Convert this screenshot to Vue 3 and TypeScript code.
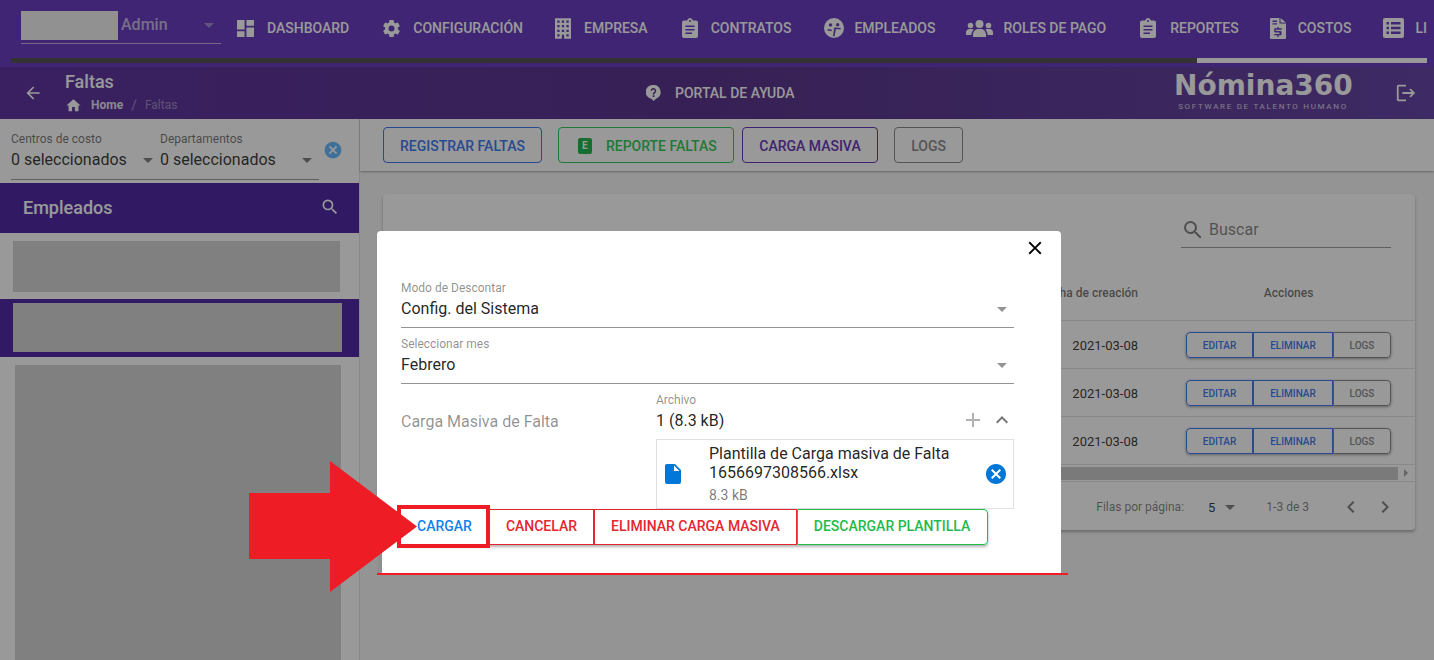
<template>
  <div class="app">
    <header class="topbar">
      <div class="topbar-row">
        <div class="company">
          <div class="company-logo"></div>
          <span class="company-role">Admin</span>
          <svg class="company-caret" viewBox="0 0 24 24" width="24" height="24"><path :d="icons.menuDown" /></svg>
        </div>
        <nav class="nav">
          <a
            v-for="item in navItems"
            :key="item.label"
            class="nav-item"
            :style="{ gap: item.gap + 'px', marginRight: item.mr + 'px' }"
          >
            <svg :viewBox="item.box" :width="item.w" :height="item.h" fill-rule="evenodd"><path :d="item.path" /></svg>
            <span>{{ item.label }}</span>
          </a>
        </nav>
      </div>
      <div class="nav-scroll"><div class="nav-scroll-thumb"></div></div>
    </header>

    <div class="subbar">
      <svg class="back" viewBox="0 0 24 24" width="20" height="20"><path :d="icons.arrowLeft" /></svg>
      <div class="title-block">
        <div class="page-title">Faltas</div>
        <div class="crumbs">
          <svg viewBox="0 0 24 24" width="17" height="17"><path :d="icons.home" /></svg>
          <b>Home</b>
          <span class="crumb-sep">/</span>
          <span class="crumb-last">Faltas</span>
        </div>
      </div>
      <div class="help">
        <svg viewBox="0 0 16 17" width="15" height="16" fill-rule="evenodd"><path :d="icons.help" /></svg>
        <span>PORTAL DE AYUDA</span>
      </div>
      <div class="brand">
        <div class="brand-name">Nómina360</div>
        <div class="brand-sub">SOFTWARE DE TALENTO HUMANO</div>
      </div>
      <svg class="logout" viewBox="0 0 24 24" width="22" height="22"><path :d="icons.logout" /></svg>
    </div>

    <div class="content">
      <aside class="sidebar">
        <div class="filters">
          <div class="filter-fields">
            <div v-for="f in filters" :key="f" class="filter">
              <label>{{ f }}</label>
              <div class="filter-value">
                0 seleccionados
                <svg viewBox="0 0 24 24" width="24" height="24"><path :d="icons.menuDown" /></svg>
              </div>
            </div>
          </div>
          <svg class="filter-clear" viewBox="0 0 24 24" width="20" height="20"><path :d="icons.closeCircle" /></svg>
        </div>
        <div class="side-head">
          <span>Empleados</span>
          <svg viewBox="0 0 24 24" width="20" height="20"><path :d="icons.magnify" /></svg>
        </div>
        <div class="side-list">
          <div class="blur blur-first"></div>
          <div class="side-selected"><div class="blur blur-selected"></div></div>
          <div class="blur blur-rest"></div>
        </div>
      </aside>

      <main class="main">
        <div class="actions">
          <button class="btn btn-blue">REGISTRAR FALTAS</button>
          <button class="btn btn-green"><i class="excel">E</i>REPORTE FALTAS</button>
          <button class="btn btn-purple">CARGA MASIVA</button>
          <button class="btn btn-grey">LOGS</button>
        </div>
        <section class="card">
          <div class="card-search">
            <div class="search-box">
              <svg viewBox="0 0 24 24" width="24" height="24"><path :d="icons.magnify" /></svg>
              <span>Buscar</span>
            </div>
          </div>
          <div class="row row-head">
            <span class="col-date">Fecha de creación</span>
            <span class="col-actions">Acciones</span>
          </div>
          <div v-for="r in rows" :key="r" class="row">
            <span class="col-date cell-date">2021-03-08</span>
            <div class="col-actions row-btns">
              <button class="mini mini-edit">EDITAR</button>
              <button class="mini mini-del">ELIMINAR</button>
              <button class="mini mini-logs">LOGS</button>
            </div>
          </div>
          <div class="hscroll">
            <div class="hscroll-thumb"></div>
            <i class="hscroll-arrow"></i>
          </div>
          <div class="pager">
            <span class="pager-label">Filas por página:</span>
            <span class="pager-size">5</span>
            <svg class="pager-caret" viewBox="0 0 24 24" width="24" height="24"><path :d="icons.menuDown" /></svg>
            <span class="pager-range">1-3 de 3</span>
            <svg class="pager-nav" viewBox="0 0 24 24" width="24" height="24"><path :d="icons.chevronLeft" /></svg>
            <svg class="pager-nav" viewBox="0 0 24 24" width="24" height="24"><path :d="icons.chevronRight" /></svg>
          </div>
        </section>
      </main>
    </div>

    <div class="scrim"></div>

    <div class="dialog">
      <div class="dialog-top">
        <svg viewBox="0 0 24 24" width="22" height="22"><path :d="icons.close" /></svg>
      </div>
      <div v-for="s in selects" :key="s.label" class="select">
        <label>{{ s.label }}</label>
        <div class="select-value">
          {{ s.value }}
          <svg viewBox="0 0 24 24" width="24" height="24"><path :d="icons.menuDown" /></svg>
        </div>
      </div>
      <div class="upload">
        <div class="upload-label">Carga Masiva de Falta</div>
        <div class="upload-field">
          <label>Archivo</label>
          <div class="upload-count">
            <span>1 (8.3 kB)</span>
            <svg class="upload-plus" viewBox="0 0 24 24" width="24" height="24"><path :d="icons.plus" /></svg>
            <svg class="upload-toggle" viewBox="0 0 24 24" width="24" height="24"><path :d="icons.chevronUp" /></svg>
          </div>
          <div class="file-card">
            <svg class="file-icon" viewBox="4 2 16 20" width="16" height="20"><path :d="icons.file" /></svg>
            <div class="file-text">
              <div class="file-name">Plantilla de Carga masiva de Falta 1656697308566.xlsx</div>
              <div class="file-size">8.3 kB</div>
            </div>
            <svg class="file-remove" viewBox="0 0 24 24" width="24" height="24"><path :d="icons.closeCircle" /></svg>
          </div>
        </div>
      </div>
      <div class="dialog-btns">
        <button class="dbtn dbtn-blue">CARGAR</button>
        <button class="dbtn dbtn-red">CANCELAR</button>
        <button class="dbtn dbtn-red">ELIMINAR CARGA MASIVA</button>
        <button class="dbtn dbtn-green">DESCARGAR PLANTILLA</button>
      </div>
    </div>

    <!-- annotation painted on top of the screenshot -->
    <div class="mark-line"></div>
    <div class="mark-notch"></div>
    <div class="mark-box"></div>
    <svg class="mark-arrow" viewBox="0 0 168 131" width="168" height="131">
      <path d="M0 32H81V0L168 65.5L81 131V98H0Z" fill="#ee1c25" />
    </svg>
  </div>
</template>

<script setup lang="ts">
const icons = {
  menuDown: 'M7,10L12,15L17,10H7Z',
  arrowLeft: 'M20,11V13H8L13.5,18.5L12.08,19.92L4.16,12L12.08,4.08L13.5,5.5L8,11H20Z',
  home: 'M10,20V14H14V20H19V12H22L12,3L2,12H5V20H10Z',
  help: 'M8 0a7.5 7.5 0 0 1 3 14.4L8 17l-1.8-2.1A7.5 7.5 0 0 1 8 0zM8 3.2a3 3 0 0 0-3 3h1.7a1.3 1.3 0 1 1 2.2.9c-.9.8-1.8 1.4-1.8 3h1.8c0-1.1.7-1.5 1.4-2.2A3 3 0 0 0 8 3.2zM7.1 10.900v1.800h1.800v-1.800z',
  logout: 'M17 7L15.59 8.41L18.17 11H8V13H18.17L15.59 15.58L17 17L22 12M4 5H12V3H4C2.9 3 2 3.9 2 5V19C2 20.1 2.9 21 4 21H12V19H4V5Z',
  closeCircle: 'M12,2C17.53,2 22,6.47 22,12C22,17.53 17.53,22 12,22C6.47,22 2,17.53 2,12C2,6.47 6.47,2 12,2M15.59,7L12,10.59L8.41,7L7,8.41L10.59,12L7,15.59L8.41,17L12,13.41L15.59,17L17,15.59L13.41,12L17,8.41L15.59,7Z',
  magnify: 'M9.5,3A6.5,6.5 0 0,1 16,9.5C16,11.11 15.41,12.59 14.44,13.73L14.71,14H15.5L20.5,19L19,20.5L14,15.5V14.71L13.73,14.44C12.59,15.41 11.11,16 9.5,16A6.5,6.5 0 0,1 3,9.5A6.5,6.5 0 0,1 9.5,3M9.5,5C7,5 5,7 5,9.5C5,12 7,14 9.5,14C12,14 14,12 14,9.5C14,7 12,5 9.5,5Z',
  close: 'M19,6.41L17.59,5L12,10.59L6.41,5L5,6.41L10.59,12L5,17.59L6.41,19L12,13.41L17.59,19L19,17.59L13.41,12L19,6.41Z',
  plus: 'M19,13H13V19H11V13H5V11H11V5H13V11H19V13Z',
  chevronUp: 'M7.41,15.41L12,10.83L16.59,15.41L18,14L12,8L6,14L7.41,15.41Z',
  chevronLeft: 'M15.41,16.58L10.83,12L15.41,7.41L14,6L8,12L14,18L15.41,16.58Z',
  chevronRight: 'M8.59,16.58L13.17,12L8.59,7.41L10,6L16,12L10,18L8.59,16.58Z',
  file: 'M13,9V3.5L18.5,9M6,2C4.89,2 4,2.89 4,4V20A2,2 0 0,0 6,22H18A2,2 0 0,0 20,20V8L14,2H6Z',
}

const clipboard = 'M2 2.500h3.200C5.600 1 6.700 0 8 0s2.400 1 2.800 2.500H14a2 2 0 0 1 2 2V18a2 2 0 0 1-2 2H2a2 2 0 0 1-2-2V4.500a2 2 0 0 1 2-2zM8 2a1 1 0 1 0 0 2 1 1 0 0 0 0-2zM3.500 7.500v1.600h9V7.500zM3.500 11v1.600h9V11zM3.500 14.500v1.600h6.500v-1.600z'

// gap and mr differ per item: the original nav sizes each icon box on its own
const navItems = [
  { label: 'DASHBOARD', box: '3 3 18 18', w: 17, h: 17, gap: 13, mr: 34, path: 'M13,3V9H21V3M13,21H21V11H13M3,21H11V15H3M3,13H11V3H3V13Z' },
  { label: 'CONFIGURACIÓN', box: '2 2 20 20', w: 17, h: 17, gap: 13, mr: 32, path: 'M12,15.5A3.5,3.5 0 0,1 8.5,12A3.5,3.5 0 0,1 12,8.5A3.5,3.5 0 0,1 15.5,12A3.5,3.5 0 0,1 12,15.5M19.43,12.97C19.47,12.65 19.5,12.33 19.5,12C19.5,11.67 19.47,11.34 19.43,11L21.54,9.37C21.73,9.22 21.78,8.95 21.66,8.73L19.66,5.27C19.54,5.05 19.27,4.96 19.05,5.05L16.56,6.05C16.04,5.66 15.5,5.32 14.87,5.07L14.5,2.42C14.46,2.18 14.25,2 14,2H10C9.75,2 9.54,2.18 9.5,2.42L9.13,5.07C8.5,5.32 7.96,5.66 7.44,6.05L4.95,5.05C4.73,4.96 4.46,5.05 4.34,5.27L2.34,8.73C2.21,8.95 2.27,9.22 2.46,9.37L4.57,11C4.53,11.34 4.5,11.67 4.5,12C4.5,12.33 4.53,12.65 4.57,12.97L2.46,14.63C2.27,14.78 2.21,15.05 2.34,15.27L4.34,18.73C4.46,18.95 4.73,19.03 4.95,18.95L7.44,17.94C7.96,18.34 8.5,18.68 9.13,18.93L9.5,21.58C9.54,21.82 9.75,22 10,22H14C14.25,22 14.46,21.82 14.5,21.58L14.87,18.93C15.5,18.67 16.04,18.34 16.56,17.94L19.05,18.95C19.27,19.03 19.54,18.95 19.66,18.73L21.66,15.27C21.78,15.05 21.73,14.78 21.54,14.63L19.43,12.97Z' },
  { label: 'EMPRESA', box: '5 3 14 18', w: 16, h: 21, gap: 13, mr: 34, path: 'M5,3V21H11V17.5H13V21H19V3H5M7,5H9V7H7V5M11,5H13V7H11V5M15,5H17V7H15V5M7,9H9V11H7V9M11,9H13V11H11V9M15,9H17V11H15V9M7,13H9V15H7V13M11,13H13V15H11V13M15,13H17V15H15V13M7,17H9V19H7V17M15,17H17V19H15V17Z' },
  { label: 'CONTRATOS', box: '0 0 16 20', w: 16, h: 20, gap: 13, mr: 33, path: clipboard },
  { label: 'EMPLEADOS', box: '0 0 20 20', w: 20, h: 20, gap: 10, mr: 31, path: 'M10 0a10 10 0 1 1 0 20a10 10 0 1 1 0-20zM6.500 5.200a1.700 1.700 0 1 0 0 3.400a1.700 1.700 0 1 0 0-3.400zM13.700 5a1.700 1.700 0 1 0 0 3.400a1.700 1.700 0 1 0 0-3.400zM10.300 9.500l-1.300 8.700h1.600l1.300-7.200 4.600.4.200-1.500zM3.800 10.900l-.3 1.500 4 .8.300-1.500z' },
  { label: 'ROLES DE PAGO', box: '0 0 27 17', w: 27, h: 17, gap: 10, mr: 34, path: 'M13.500 0a4 4 0 1 1 0 8a4 4 0 1 1 0-8zM4.500 2.700a2.800 2.800 0 1 1 0 5.600a2.800 2.800 0 1 1 0-5.600zM22.500 2.700a2.800 2.800 0 1 1 0 5.600a2.800 2.800 0 1 1 0-5.600zM7 17v-2.500c0-3 2.500-5.500 5-5.500h3c2.500 0 5 2.500 5 5.500V17zM0 15v-2.500C0 10.500 1.500 9 3.500 9H6c.7 0 1.300.2 1.700.6C6.300 11 5.400 13 5.400 15zM27 15v-2.500c0-2-1.500-3.500-3.500-3.500H21c-.7 0-1.300.2-1.700.6 1.400 1.400 2.300 3.400 2.300 5.400z' },
  { label: 'REPORTES', box: '0 0 16 20', w: 16, h: 20, gap: 14, mr: 31, path: clipboard },
  { label: 'COSTOS', box: '0 0 16 21', w: 16, h: 21, gap: 12, mr: 32, path: 'M1 0h8.500v5.500H16V20a1 1 0 0 1-1 1H1a1 1 0 0 1-1-1V1a1 1 0 0 1 1-1zM2.500 2.500v1.400h4.500V2.500zM2.500 5.200v1.400h4.500V5.200zM7.300 9v1.300H5.200a1 1 0 0 0-1 1v2.300a1 1 0 0 0 1 1h4.300v1.300H4.200v1.400h3.100V19h1.400v-1.700h1.800a1 1 0 0 0 1-1v-2.300a1 1 0 0 0-1-1H5.700v-1.300h6v-1.400h-3V9zM10.500 0L16 4.500h-5.500z' },
  { label: 'LI', box: '0 0 21 20', w: 21, h: 20, gap: 11, mr: 0, path: 'M2 0h17a2 2 0 0 1 2 2v16a2 2 0 0 1-2 2H2a2 2 0 0 1-2-2V2a2 2 0 0 1 2-2zM3.500 4v2.500H6V4zM8 4v2.500h9.500V4zM3.500 8.800v2.500H6V8.800zM8 8.800v2.500h9.500V8.800zM3.500 13.500V16H6v-2.500zM8 13.500V16h9.500v-2.500z' },
]

const filters = ['Centros de costo', 'Departamentos']
const rows = [1, 2, 3]
const selects = [
  { label: 'Modo de Descontar', value: 'Config. del Sistema' },
  { label: 'Seleccionar mes', value: 'Febrero' },
]
</script>

<style>
html, body {
  margin: 0;
  overflow: hidden;
}
</style>

<style scoped>
.app {
  position: relative;
  width: 1434px;
  height: 660px;
  overflow: hidden;
  display: flex;
  flex-direction: column;
  font-family: Roboto, "Liberation Sans", sans-serif;
  background: #fff;
}

button {
  font-family: inherit;
  background: #fff;
  cursor: pointer;
  padding: 0;
}

/* top bar */
.topbar {
  height: 67px;
  flex: none;
  background: #592ab9;
  color: #fff;
  fill: #fff;
  overflow: hidden;
}
.topbar-row {
  display: flex;
  height: 58px;
  padding-left: 21px;
}
.company {
  position: relative;
  width: 200px;
  height: 43px;
  flex: none;
  display: flex;
  align-items: flex-start;
  border-bottom: 1px solid rgba(255, 255, 255, 0.6);
}
.company-logo {
  width: 97px;
  height: 29px;
  margin-top: 11px;
  background: #f0f0f0;
}
.company-role {
  margin: 15px 0 0 3px;
  font-size: 16px;
  font-weight: 500;
  line-height: 20px;
  color: rgba(255, 255, 255, 0.65);
}
.company-caret {
  position: absolute;
  left: 176px;
  top: 13px;
  fill: rgba(255, 255, 255, 0.4);
}
.nav {
  display: flex;
  align-items: center;
  height: 56px;
  margin-left: 16px;
  white-space: nowrap;
}
.nav-item {
  display: flex;
  align-items: center;
  font-size: 14px;
  font-weight: 500;
}
.nav-scroll {
  height: 5px;
  margin: 0 7px 0 11px;
  background: #444;
  display: flex;
  justify-content: flex-end;
}
.nav-scroll-thumb {
  width: 230px;
  background: #fff;
}

/* page header */
.subbar {
  height: 52px;
  flex: none;
  display: flex;
  align-items: center;
  background: linear-gradient(90deg, #502198 0%, #4a2181 50%, #57329d 100%);
  color: #fff;
  fill: #fff;
}
.back {
  margin-left: 23px;
}
.title-block {
  width: 581px;
  margin-left: 22px;
}
.page-title {
  font-size: 18px;
  font-weight: 500;
  line-height: 24px;
}
.crumbs {
  display: flex;
  align-items: center;
  height: 22px;
  font-size: 12px;
}
.crumbs b {
  margin-left: 9px;
  font-weight: 700;
  opacity: 0.85;
}
.crumb-sep {
  margin: 0 8px;
  opacity: 0.4;
  font-size: 14px;
}
.crumb-last {
  opacity: 0.4;
}
.help {
  display: flex;
  align-items: center;
  gap: 14px;
  font-size: 14px;
  font-weight: 500;
  width: 528px;
}
.brand {
  width: 178px;
  text-align: center;
  color: #fff;
}
.brand-name {
  font-family: "DejaVu Sans", sans-serif;
  font-size: 28px;
  font-weight: 700;
  line-height: 32px;
  margin-top: -4px;
  white-space: nowrap;
}
.brand-sub {
  font-size: 8px;
  letter-spacing: 1.7px;
  line-height: 10px;
  white-space: nowrap;
  opacity: 0.75;
}
.logout {
  margin-left: 43px;
}

/* body */
.content {
  flex: 1;
  display: flex;
  min-height: 0;
}
.sidebar {
  width: 359px;
  flex: none;
  display: flex;
  flex-direction: column;
  border-right: 1px solid #e0e0e0;
}
.filters {
  position: relative;
  height: 64px;
  box-sizing: border-box;
  padding: 12px 0 0 11px;
  flex: none;
}
.filter-fields {
  display: flex;
  width: 308px;
  height: 48px;
  border-bottom: 1px solid #949494;
}
.filter {
  width: 149px;
}
.filter + .filter {
  width: 159px;
}
.filter label {
  display: block;
  font-size: 12px;
  line-height: 16px;
  color: rgba(0, 0, 0, 0.6);
}
.filter-value {
  display: flex;
  justify-content: space-between;
  align-items: center;
  margin-top: 1px;
  font-size: 16px;
  line-height: 24px;
  color: rgba(0, 0, 0, 0.87);
  fill: rgba(0, 0, 0, 0.54);
}
.filter-clear {
  position: absolute;
  left: 323px;
  top: 21px;
  fill: #5ab4ff;
}
.side-head {
  height: 50px;
  flex: none;
  box-sizing: border-box;
  display: flex;
  align-items: center;
  justify-content: space-between;
  padding: 0 19px 2px 23px;
  background: #3f169b;
  color: #fff;
  fill: #fff;
  font-size: 18px;
  font-weight: 500;
}
.side-list {
  flex: 1;
  display: flex;
  flex-direction: column;
  padding-top: 8px;
  min-height: 0;
}
.blur {
  background: #d1d1d1;
}
.blur-first {
  width: 327px;
  height: 51px;
  margin-left: 13px;
}
.side-selected {
  margin-top: 7px;
  padding: 4px 0 5px 13px;
  background: #3f169b;
}
.blur-selected {
  width: 329px;
  height: 49px;
}
.blur-rest {
  flex: 1;
  width: 326px;
  margin: 8px 0 0 15px;
}

/* main column */
.main {
  flex: 1;
  min-width: 0;
  background: #f5f5f5;
}
.actions {
  height: 52px;
  box-sizing: border-box;
  display: flex;
  align-items: center;
  padding-left: 23px;
  background: #fff;
  box-shadow: 0 1px 2px rgba(0, 0, 0, 0.35);
}
.btn {
  height: 36px;
  padding: 1px 16px 0;
  border-radius: 4px;
  border: 1px solid currentColor;
  font-size: 14px;
  font-weight: 500;
  display: flex;
  align-items: center;
}
.btn-blue { color: #2f6df0; margin-right: 16px; }
.btn-green { color: #1fc44a; margin-right: 8px; padding: 1px 16px 0 19px; }
.btn-purple { color: #5a26b0; margin-right: 16px; padding: 1px 16.5px 0; }
.btn-grey { color: #808080; }
.excel {
  width: 14px;
  height: 16px;
  margin-right: 14px;
  border-radius: 2px;
  background: #12b03c;
  color: #fff;
  font-style: normal;
  font-size: 10px;
  font-weight: 700;
  line-height: 16px;
  text-align: center;
}
.card {
  width: 1032px;
  height: 336px;
  margin: 23px 0 0 23px;
  background: #fff;
  border-radius: 4px;
  box-shadow: 0 2px 3px rgba(0, 0, 0, 0.3);
  display: flex;
  flex-direction: column;
}
.card-search {
  height: 70px;
  flex: none;
  padding-right: 24px;
  display: flex;
  justify-content: flex-end;
  align-items: flex-start;
}
.search-box {
  width: 210px;
  height: 54px;
  box-sizing: border-box;
  display: flex;
  align-items: center;
  padding-top: 18px;
  gap: 4px;
  border-bottom: 1px solid rgba(0, 0, 0, 0.42);
  color: rgba(0, 0, 0, 0.54);
  fill: rgba(0, 0, 0, 0.54);
  font-size: 16px;
}
.row {
  height: 48px;
  flex: none;
  box-sizing: border-box;
  display: flex;
  justify-content: flex-end;
  align-items: center;
  padding: 1px 24px 0 0;
  border-top: 1px solid #e0e0e0;
  font-size: 13px;
  color: rgba(0, 0, 0, 0.87);
}
.row-head {
  height: 56px;
  border-top: 0;
  padding-top: 2px;
  font-size: 12px;
  font-weight: 500;
  color: rgba(0, 0, 0, 0.6);
}
.col-date {
  text-align: right;
  margin-right: 48px;
}
.col-actions {
  width: 205px;
  text-align: center;
}
.row-btns {
  display: flex;
  height: 26px;
  margin-top: -1px;
  border-radius: 4px;
  box-shadow: 0 1px 3px rgba(0, 0, 0, 0.4);
}
.mini {
  height: 26px;
  padding-top: 2px;
  border: 1px solid #2f6df0;
  font-size: 10px;
  font-weight: 500;
  color: #2f6df0;
}
.mini-edit { width: 67px; border-radius: 4px 0 0 4px; }
.mini-del { width: 80px; }
.mini-logs { width: 58px; border-color: #808080; color: #808080; border-radius: 0 4px 4px 0; }
.hscroll {
  height: 18px;
  flex: none;
  display: flex;
  align-items: center;
  border-top: 1px solid #e0e0e0;
  border-bottom: 1px solid #e0e0e0;
  box-sizing: border-box;
}
.hscroll-thumb {
  width: 1015px;
  height: 13px;
  background: #c6c6c6;
}
.hscroll-arrow {
  margin-left: 6px;
  border-left: 4px solid #a0a0a0;
  border-top: 4px solid transparent;
  border-bottom: 4px solid transparent;
}
.pager {
  flex: 1;
  display: flex;
  align-items: center;
  padding: 2px 18px 0 0;
  justify-content: flex-end;
  font-size: 12px;
  color: rgba(0, 0, 0, 0.54);
  fill: rgba(0, 0, 0, 0.54);
}
.pager-size {
  margin-left: 24px;
  font-size: 13px;
  color: rgba(0, 0, 0, 0.87);
}
.pager-caret {
  margin-left: 3px;
}
.pager-range {
  margin: 0 30px 0 24px;
}
.pager-nav + .pager-nav {
  margin-left: 10px;
}

/* dialog */
.scrim {
  position: absolute;
  inset: 0;
  background: rgba(33, 33, 33, 0.46);
}
.dialog {
  position: absolute;
  left: 377px;
  top: 231px;
  width: 684px;
  height: 342px;
  box-sizing: border-box;
  padding: 0 47px 0 24px;
  background: #fff;
  border-radius: 4px 4px 0 0;
  display: flex;
  flex-direction: column;
}
.dialog-top {
  height: 50px;
  flex: none;
  display: flex;
  justify-content: flex-end;
  margin-right: -32px;
  padding-top: 6px;
  box-sizing: border-box;
  fill: #000;
}
.select {
  height: 47px;
  margin-bottom: 9px;
  flex: none;
  box-sizing: border-box;
  border-bottom: 1px solid #949494;
}
.select label,
.upload-field label {
  display: block;
  font-size: 12px;
  line-height: 14px;
  color: rgba(0, 0, 0, 0.46);
}
.select-value {
  display: flex;
  justify-content: space-between;
  align-items: center;
  margin-top: 1px;
  font-size: 16px;
  line-height: 26px;
  color: rgba(0, 0, 0, 0.87);
  fill: rgba(0, 0, 0, 0.42);
}
.upload {
  display: flex;
  flex: none;
  height: 116px;
}
.upload-label {
  width: 255px;
  padding-top: 19px;
  flex: none;
  font-size: 16px;
  line-height: 20px;
  color: rgba(0, 0, 0, 0.44);
}
.upload-field {
  flex: 1;
}
.upload-count {
  display: flex;
  align-items: center;
  height: 26px;
  margin-bottom: 6px;
  font-size: 16px;
  color: rgba(0, 0, 0, 0.87);
  fill: rgba(0, 0, 0, 0.3);
}
.upload-plus {
  margin-left: auto;
  margin-right: 5px;
}
.upload-toggle {
  fill: rgba(0, 0, 0, 0.54);
}
.file-card {
  height: 70px;
  box-sizing: border-box;
  display: flex;
  align-items: center;
  border: 1px solid #e0e0e0;
  padding: 0 5px 0 8px;
}
.file-icon {
  flex: none;
  fill: #0277d8;
}
.file-text {
  width: 262px;
  margin-left: 28px;
}
.file-name {
  font-size: 16px;
  line-height: 19px;
  color: rgba(0, 0, 0, 0.87);
}
.file-size {
  margin-top: 3px;
  font-size: 14px;
  line-height: 20px;
  color: rgba(0, 0, 0, 0.54);
}
.file-remove {
  margin-left: auto;
  flex: none;
  fill: #0277d8;
}
.dialog-btns {
  display: flex;
  align-self: flex-start;
  box-shadow: 0 2px 3px rgba(0, 0, 0, 0.3);
  border-radius: 4px;
}
.dbtn {
  height: 36px;
  padding: 0 16px 2px;
  border: 1px solid currentColor;
  font-size: 14px;
  font-weight: 500;
}
.dbtn-blue { color: #1282ea; border: 0; padding-right: 17px; }
.dbtn-red { color: #e52630; }
.dbtn-green { color: #1fba4a; border-radius: 0 4px 4px 0; padding-right: 17px; }

/* red annotation */
.mark-line {
  position: absolute;
  left: 377px;
  top: 573px;
  width: 691px;
  height: 2px;
  background: #ee1c25;
}
.mark-notch {
  position: absolute;
  left: 377px;
  top: 505px;
  width: 5px;
  height: 68px;
  background: #8f8f8f;
}
.mark-box {
  position: absolute;
  left: 397px;
  top: 505px;
  width: 93px;
  height: 43px;
  box-sizing: border-box;
  border: 4px solid #ee1c25;
}
.mark-arrow {
  position: absolute;
  left: 249px;
  top: 461px;
}
</style>
